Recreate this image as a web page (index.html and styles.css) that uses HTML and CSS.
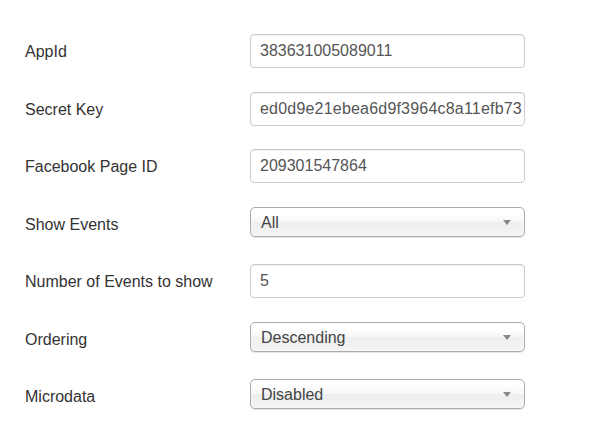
FILE: index.html
```html
<!DOCTYPE html>
<html>
<head>
<meta charset="utf-8">
<link rel="stylesheet" href="styles.css">
</head>
<body>
<form class="form">
  <label class="label">AppId</label>
  <div class="field"><input class="text-input" type="text" value="383631005089011"></div>

  <label class="label">Secret Key</label>
  <div class="field"><input class="text-input text-input-long" type="text" value="ed0d9e21ebea6d9f3964c8a11efb73"></div>

  <label class="label">Facebook Page ID</label>
  <div class="field"><input class="text-input" type="text" value="209301547864"></div>

  <label class="label label-select">Show Events</label>
  <div class="field"><div class="chosen"><span class="chosen-value">All</span><span class="arrow"></span></div></div>

  <label class="label">Number of Events to show</label>
  <div class="field"><input class="text-input" type="text" value="5"></div>

  <label class="label label-select">Ordering</label>
  <div class="field"><div class="chosen"><span class="chosen-value">Descending</span><span class="arrow"></span></div></div>

  <label class="label label-select">Microdata</label>
  <div class="field"><div class="chosen"><span class="chosen-value">Disabled</span><span class="arrow"></span></div></div>
</form>
</body>
</html>
```

FILE: styles.css
```css
html, body {
  margin: 0;
  padding: 0;
  background: #fff;
}
body {
  font-family: "Liberation Sans", Arial, sans-serif;
  font-size: 16px;
  color: #333;
}
.form {
  display: grid;
  grid-template-columns: 225px 275px;
  grid-template-rows: 58px 58px 56px 56px 62px 50px 64px;
  align-items: center;
  padding: 22px 0 0 25px;
  margin: 0;
}
.label {
  color: #333;
  font-size: 16px;
  line-height: 20px;
  padding-top: 2px;
}
.label-select {
  padding-top: 5px;
}
.field {
  display: flex;
  align-items: center;
}
.text-input {
  box-sizing: border-box;
  width: 275px;
  height: 34px;
  margin: 0;
  padding: 0 2px 0 9px;
  border: 1px solid #ccc;
  border-radius: 4px;
  font-family: "Liberation Sans", Arial, sans-serif;
  font-size: 16px;
  color: #555;
  background: #fff;
  box-shadow: inset 0 1px 1px rgba(0,0,0,0.075);
  outline: none;
}
.text-input-long {
  letter-spacing: 0.2px;
}
.chosen {
  box-sizing: border-box;
  width: 275px;
  height: 30px;
  display: flex;
  align-items: center;
  justify-content: space-between;
  padding: 0 13px 0 10px;
  border: 1px solid #aaa;
  border-radius: 5px;
  background: linear-gradient(#fff 20%, #f6f6f6 50%, #eee 52%, #f4f4f4 100%);
  box-shadow: inset 0 0 3px #fff, 0 1px 1px rgba(0,0,0,0.1);
  color: #444;
  font-size: 16px;
}
.chosen-value {
  line-height: 20px;
  padding-top: 1px;
}
.arrow {
  width: 0;
  height: 0;
  border-left: 4px solid transparent;
  border-right: 4px solid transparent;
  border-top: 5px solid #888;
  margin-top: 1px;
}
```
